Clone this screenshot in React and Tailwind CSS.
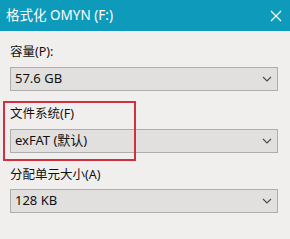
import React from 'react';

const Chevron = () => (
  <svg width="10" height="6" viewBox="0 0 10 6" className="text-[#4a4a4a]">
    <path d="M1 1 L5 5 L9 1" fill="none" stroke="currentColor" strokeWidth="1.1" />
  </svg>
);

const Combo = ({ value }) => (
  <div className="h-[24px] w-[268px] flex items-center justify-between border border-[#adadad] bg-[#e2e0df] pl-[4px] pr-[5px] text-[13px] text-[#111]">
    <span>{value}</span>
    <Chevron />
  </div>
);

const Field = ({ label, value, className, gap = 'mb-[7px]' }) => (
  <div className={className}>
    <div className={`h-[16px] leading-[16px] text-[12.5px] text-[#111] ${gap}`}>{label}</div>
    <Combo value={value} />
  </div>
);

export default function App() {
  return (
    <div
      className="relative w-[290px] h-[239px] overflow-hidden bg-[#f1efee]"
      style={{ fontFamily: '"Noto Sans", "Noto Sans CJK SC", sans-serif' }}
    >
      <div className="h-[31px] bg-[#0d9abb] flex items-center justify-between pl-[6px] pr-[8px]">
        <span className="text-white text-[13.5px]">格式化 OMYN (F:)</span>
        <svg width="12" height="12" viewBox="0 0 12 12" className="text-white">
          <path d="M1 1 L11 11 M11 1 L1 11" stroke="currentColor" strokeWidth="1.2" />
        </svg>
      </div>
      <div className="pl-[10px] pt-[13px]">
        <Field label="容量(P):" value="57.6 GB" />
        <Field label="文件系统(F)" value="exFAT (默认)" className="mt-[15px]" />
        <Field label="分配单元大小(A)" value="128 KB" className="mt-[14px]" gap="mb-[6px]" />
      </div>
      <div className="absolute left-[3px] top-[101px] w-[133px] h-[60px] border-2 border-[#d2303c]" />
    </div>
  );
}
